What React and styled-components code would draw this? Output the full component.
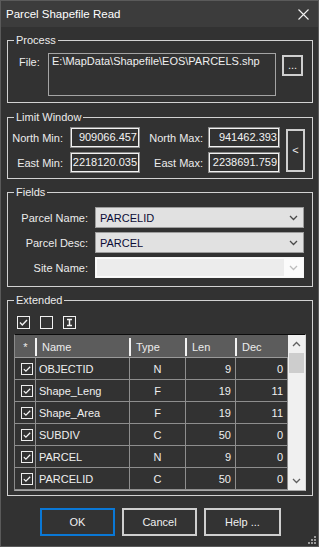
import React from 'react';
import styled, { createGlobalStyle } from 'styled-components';

const GlobalStyle = createGlobalStyle`
  html, body { margin: 0; padding: 0; background: #323232; }
  body {
    font-family: "Liberation Sans", Arial, sans-serif;
    font-size: 11px;
    color: #ececec;
  }
  * { box-sizing: border-box; }
`;

const Window = styled.div`
  position: relative;
  width: 319px;
  height: 547px;
  border: 1px solid #5a5a5a;
  background: #323232;
  display: flex;
  flex-direction: column;
  overflow: hidden;
`;

const TitleBar = styled.div`
  flex: none;
  height: 26px;
  background: #3c3c3c;
  display: flex;
  align-items: center;
  justify-content: space-between;
  padding: 0 9px 0 5px;
  font-size: 11.5px;
  color: #ffffff;
`;

const Body = styled.div`
  flex: 1;
  display: flex;
  flex-direction: column;
  padding: 0 5px 0 6px;
`;

const Group = styled.section`
  position: relative;
  flex: none;
  margin-top: ${(p) => p.$top}px;
  height: ${(p) => p.$h}px;
  border: 1px solid #d2d2d2;
`;

const Caption = styled.span`
  position: absolute;
  top: -8px;
  left: 6px;
  padding: 0 2px;
  line-height: 15px;
  background: #323232;
  color: #ececec;
`;

const ProcessRow = styled.div`
  display: flex;
  align-items: flex-start;
  padding: 12px 0 0 11px;
`;

const FileLabel = styled.span`
  width: 29px;
  margin-top: 3px;
  line-height: 13px;
`;

const PathBox = styled.div`
  width: 228px;
  height: 43px;
  border: 1px solid #a4a4a4;
  padding: 1px 3px;
  line-height: 13px;
  white-space: nowrap;
  color: #efefef;
`;

const SmallButton = styled.div`
  flex: none;
  width: ${(p) => p.$w}px;
  height: ${(p) => p.$h}px;
  margin-left: 6px;
  margin-top: ${(p) => p.$mt || 0}px;
  border: 2px solid #cfcfcf;
  background: #333333;
  display: flex;
  align-items: center;
  justify-content: center;
  color: #ececec;
  line-height: 1;
`;

const LimitRow = styled.div`
  display: flex;
  align-items: center;
  padding-top: 9px;
`;

const CoordGrid = styled.div`
  display: grid;
  grid-template-columns: 62px 70px 68px 72px;
  grid-auto-rows: 21px;
  row-gap: 4px;
  align-items: center;
`;

const RightLabel = styled.span`
  text-align: right;
  padding-right: ${(p) => p.$pr}px;
  white-space: nowrap;
`;

const ValueBox = styled.div`
  height: 21px;
  border: 1px solid #8a8a8a;
  box-shadow: inset 0 0 0 1px #f2f2f2;
  text-align: right;
  padding-right: 2px;
  line-height: 19px;
  color: #f2f2f2;
`;

const FieldsGrid = styled.div`
  display: grid;
  grid-template-columns: 87px 209px;
  grid-template-rows: 21px 21px 21px;
  row-gap: 4px;
  align-items: center;
  padding-top: 14px;
`;

const Select = styled.div`
  height: 21px;
  display: flex;
  align-items: center;
  border: 1px solid #9c9c9c;
  background: #e1e1e1;
  padding: 0 5px 0 4px;
  color: #0c0c36;
`;

const SelectText = styled.span`
  flex: 1;
`;

const DisabledSelect = styled.div`
  height: 21px;
  display: flex;
  align-items: stretch;
  border: 1px solid #f6f6f6;
  background: #fbfbfb;
  padding: 1px 0 1px 1px;
`;

const DisabledField = styled.div`
  flex: 1;
  background: #ececec;
`;

const DisabledArrow = styled.div`
  width: 19px;
  display: flex;
  align-items: center;
  justify-content: center;
`;

const CheckRow = styled.div`
  display: flex;
  gap: 10px;
  padding: 15px 0 0 9px;
`;

const Check = styled.div`
  width: 13px;
  height: 13px;
  border: 1px solid #f0f0f0;
  background: #333333;
  display: flex;
  align-items: center;
  justify-content: center;
`;

const Table = styled.div`
  margin: 5px 0 0 6px;
  width: 292px;
  height: 157px;
  display: flex;
  border-top: 1px solid #0c0c0c;
  border-left: 1px solid #8a8a8a;
  border-right: 1px solid #d8d8d8;
  border-bottom: 1px solid #a8a8a8;
`;

const Grid = styled.div`
  display: grid;
  grid-template-columns: 21px 94px 56px 50px 52px;
  grid-template-rows: 23px repeat(6, 22px);
  width: 273px;
  align-content: start;
`;

const HeadCell = styled.div`
  position: relative;
  background: #5c5c5c;
  border-bottom: 1px solid #9a9a9a;
  display: flex;
  align-items: center;
  justify-content: ${(p) => (p.$center ? 'center' : 'flex-start')};
  padding: 1px 0 0 ${(p) => (p.$center ? 0 : 6)}px;
  color: #ececec;
  &::before {
    content: '';
    display: ${(p) => (p.$sep ? 'block' : 'none')};
    position: absolute;
    left: -1px;
    top: 3px;
    bottom: 1px;
    width: 2px;
    background: #f2f2f2;
  }
`;

const Cell = styled.div`
  display: flex;
  align-items: center;
  justify-content: ${(p) => p.$align || 'flex-start'};
  padding: 0 ${(p) => (p.$align === 'flex-end' ? 4 : 0)}px 0 ${(p) => (p.$align === 'flex-start' || !p.$align ? 3 : 0)}px;
  border-right: 1px solid #8e8e8e;
  border-bottom: 1px solid #8e8e8e;
  white-space: nowrap;
  color: #efefef;
`;

const RowCheck = styled.div`
  width: 12px;
  height: 12px;
  border: 1px solid #ececec;
  display: flex;
  align-items: center;
  justify-content: center;
  margin-left: 3px;
`;

const Scrollbar = styled.div`
  width: 17px;
  background: #f0f0f0;
  display: flex;
  flex-direction: column;
`;

const ScrollBtn = styled.div`
  height: 18px;
  flex: none;
  display: flex;
  align-items: center;
  justify-content: center;
`;

const Thumb = styled.div`
  height: 20px;
  margin: 0 1px;
  background: #cdcdcd;
  flex: none;
`;

const Track = styled.div`
  flex: 1;
`;

const ButtonRow = styled.div`
  flex: none;
  display: flex;
  justify-content: center;
  gap: 7px;
  margin-top: 12px;
  padding-left: 1px;
`;

const DialogButton = styled.div`
  width: ${(p) => p.$w}px;
  height: 28px;
  border: 2px solid ${(p) => (p.$primary ? '#0a78d6' : '#cfcfcf')};
  background: #333333;
  display: flex;
  align-items: center;
  justify-content: center;
  color: #f0f0f0;
`;

const Grip = styled.svg`
  position: absolute;
  right: 1px;
  bottom: 1px;
`;

const CheckMark = ({ size = 11 }) => (
  <svg width={size} height={size} viewBox="0 0 11 11">
    <path d="M2 5.6 L4.3 7.9 L9 3" fill="none" stroke="#f4f4f4" strokeWidth="1.4" />
  </svg>
);

const Chevron = ({ color = '#4a4a4a', up = false }) => (
  <svg width="9" height="6" viewBox="0 0 9 6">
    <path
      d={up ? 'M1 5 L4.5 1.5 L8 5' : 'M1 1 L4.5 4.5 L8 1'}
      fill="none"
      stroke={color}
      strokeWidth="1.3"
    />
  </svg>
);

const rows = [
  ['OBJECTID', 'N', '9', '0'],
  ['Shape_Leng', 'F', '19', '11'],
  ['Shape_Area', 'F', '19', '11'],
  ['SUBDIV', 'C', '50', '0'],
  ['PARCEL', 'N', '9', '0'],
  ['PARCELID', 'C', '50', '0'],
];

export default function App() {
  return (
    <>
      <GlobalStyle />
      <Window>
        <TitleBar>
          <span>Parcel Shapefile Read</span>
          <svg width="11" height="11" viewBox="0 0 11 11">
            <path d="M0.5 0.5 L10.5 10.5 M10.5 0.5 L0.5 10.5" stroke="#f4f4f4" strokeWidth="1.1" />
          </svg>
        </TitleBar>
        <Body>
          <Group $top={13} $h={63}>
            <Caption>Process</Caption>
            <ProcessRow>
              <FileLabel>File:</FileLabel>
              <PathBox>E:\MapData\Shapefile\EOS\PARCELS.shp</PathBox>
              <SmallButton $w={21} $h={21} $mt={2}>...</SmallButton>
            </ProcessRow>
          </Group>

          <Group $top={14} $h={62}>
            <Caption>Limit Window</Caption>
            <LimitRow>
              <CoordGrid>
                <RightLabel $pr={7}>North Min:</RightLabel>
                <ValueBox>909066.457</ValueBox>
                <RightLabel $pr={5}>North Max:</RightLabel>
                <ValueBox>941462.393</ValueBox>
                <RightLabel $pr={7}>East Min:</RightLabel>
                <ValueBox>2218120.035</ValueBox>
                <RightLabel $pr={5}>East Max:</RightLabel>
                <ValueBox>2238691.759</ValueBox>
              </CoordGrid>
              <SmallButton $w={19} $h={43}>&lt;</SmallButton>
            </LimitRow>
          </Group>

          <Group $top={13} $h={95}>
            <Caption>Fields</Caption>
            <FieldsGrid>
              <RightLabel $pr={7}>Parcel Name:</RightLabel>
              <Select>
                <SelectText>PARCELID</SelectText>
                <Chevron />
              </Select>
              <RightLabel $pr={7}>Parcel Desc:</RightLabel>
              <Select>
                <SelectText>PARCEL</SelectText>
                <Chevron />
              </Select>
              <RightLabel $pr={7}>Site Name:</RightLabel>
              <DisabledSelect>
                <DisabledField />
                <DisabledArrow>
                  <Chevron color="#bdbdbd" />
                </DisabledArrow>
              </DisabledSelect>
            </FieldsGrid>
          </Group>

          <Group $top={13} $h={196}>
            <Caption>Extended</Caption>
            <CheckRow>
              <Check>
                <CheckMark />
              </Check>
              <Check />
              <Check>
                <svg width="11" height="11" viewBox="0 0 11 11">
                  <path d="M3 2.5 H8 M5.5 2.5 V8.5 M3 8.5 H8" fill="none" stroke="#f4f4f4" strokeWidth="1.5" />
                </svg>
              </Check>
            </CheckRow>
            <Table>
              <Grid>
                <HeadCell $center>*</HeadCell>
                <HeadCell $sep>Name</HeadCell>
                <HeadCell $sep>Type</HeadCell>
                <HeadCell $sep>Len</HeadCell>
                <HeadCell $sep>Dec</HeadCell>
                {rows.map(([name, type, len, dec]) => (
                  <React.Fragment key={name}>
                    <Cell>
                      <RowCheck>
                        <CheckMark size={10} />
                      </RowCheck>
                    </Cell>
                    <Cell $align="flex-start">{name}</Cell>
                    <Cell $align="center">{type}</Cell>
                    <Cell $align="flex-end">{len}</Cell>
                    <Cell $align="flex-end">{dec}</Cell>
                  </React.Fragment>
                ))}
              </Grid>
              <Scrollbar>
                <ScrollBtn>
                  <Chevron up color="#606060" />
                </ScrollBtn>
                <Thumb />
                <Track />
                <ScrollBtn>
                  <Chevron color="#606060" />
                </ScrollBtn>
              </Scrollbar>
            </Table>
          </Group>

          <ButtonRow>
            <DialogButton $w={75} $primary>OK</DialogButton>
            <DialogButton $w={75}>Cancel</DialogButton>
            <DialogButton $w={77}>Help ...</DialogButton>
          </ButtonRow>
        </Body>
        <Grip width="11" height="11" viewBox="0 0 11 11">
          <g fill="#9a9a9a">
            <rect x="8" y="2" width="2" height="2" />
            <rect x="5" y="5" width="2" height="2" />
            <rect x="8" y="5" width="2" height="2" />
            <rect x="2" y="8" width="2" height="2" />
            <rect x="5" y="8" width="2" height="2" />
            <rect x="8" y="8" width="2" height="2" />
          </g>
        </Grip>
      </Window>
    </>
  );
}
